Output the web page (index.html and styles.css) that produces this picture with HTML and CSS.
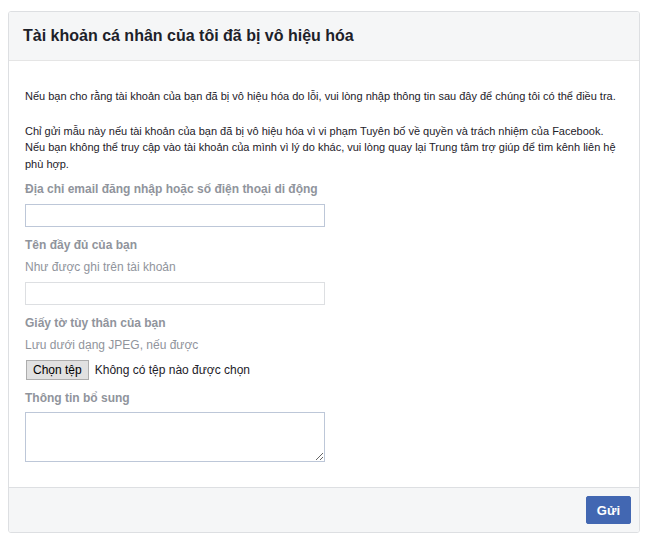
FILE: index.html
```html
<!DOCTYPE html>
<html lang="vi">
<head>
<meta charset="utf-8">
<title>Tài khoản cá nhân của tôi đã bị vô hiệu hóa</title>
<link rel="stylesheet" href="styles.css">
</head>
<body>
<div class="card">
  <div class="card-header">
    <h2 class="title">Tài khoản cá nhân của tôi đã bị vô hiệu hóa</h2>
  </div>
  <form class="card-body">
    <p class="intro">Nếu bạn cho rằng tài khoản của bạn đã bị vô hiệu hóa do lỗi, vui lòng nhập thông tin sau đây để chúng tôi có thể điều tra.</p>
    <p class="intro second">Chỉ gửi mẫu này nếu tài khoản của bạn đã bị vô hiệu hóa vì vi phạm Tuyên bố về quyền và trách nhiệm của Facebook. Nếu bạn không thể truy cập vào tài khoản của mình vì lý do khác, vui lòng quay lại Trung tâm trợ giúp để tìm kênh liên hệ phù hợp.</p>

    <div class="field">
      <label class="label">Địa chỉ email đăng nhập hoặc số điện thoại di động</label>
      <input class="text-input" type="text">
    </div>

    <div class="field">
      <label class="label with-help">Tên đầy đủ của bạn</label>
      <div class="help">Như được ghi trên tài khoản</div>
      <input class="text-input light" type="text">
    </div>

    <div class="field">
      <label class="label with-help">Giấy tờ tùy thân của bạn</label>
      <div class="help">Lưu dưới dạng JPEG, nếu được</div>
      <div class="file-row">
        <button type="button" class="file-btn">Chọn tệp</button>
        <span class="file-name">Không có tệp nào được chọn</span>
      </div>
    </div>

    <div class="field last">
      <label class="label with-help">Thông tin bổ sung</label>
      <textarea class="text-area"></textarea>
    </div>
  </form>
  <div class="card-footer">
    <button type="button" class="submit-btn">Gửi</button>
  </div>
</div>
</body>
</html>
```

FILE: styles.css
```css
html, body {
  background: #ffffff;
}
body {
  margin: 11px 6px 0 8px;
  font-family: "Liberation Sans", Arial, Helvetica, sans-serif;
  font-size: 12px;
  color: #1d2129;
}
.card {
  border: 1px solid #dddfe2;
  border-radius: 3px;
  background: #fff;
  overflow: hidden;
}
.card-header {
  background: #f5f6f7;
  border-bottom: 1px solid #e5e5e5;
  padding: 14px 14px;
}
.title {
  margin: 0;
  font-size: 16px;
  line-height: 20px;
  font-weight: bold;
  color: #1d2129;
}
.card-body {
  padding: 27px 16px 25px;
}
.intro {
  margin: 0;
  font-size: 11px;
  line-height: 16.5px;
}
.intro.second {
  margin-top: 18px;
  margin-bottom: 9px;
}
.field {
  margin-bottom: 10px;
}
.field.last {
  margin-bottom: 0;
}
.label {
  display: block;
  font-weight: bold;
  font-size: 12px;
  line-height: 16px;
  color: #90949c;
  margin-bottom: 7px;
}
.label.with-help {
  margin-bottom: 6px;
}
.help {
  color: #90949c;
  line-height: 16px;
  margin-bottom: 7px;
}
.text-input {
  display: block;
  box-sizing: border-box;
  width: 300px;
  height: 23px;
  margin: 0;
  border: 1px solid #bdc7d8;
  padding: 3px;
  font: inherit;
  outline: none;
}
.text-input.light {
  border-color: #dddfe2;
}
.file-row {
  display: flex;
  align-items: center;
  height: 20px;
}
.file-btn {
  box-sizing: border-box;
  height: 20px;
  margin: 0 6px 0 1px;
  padding: 0 6px;
  background: #e1e1e1;
  border: 1px solid #adadad;
  border-radius: 0;
  font-family: "Liberation Sans", Arial, sans-serif;
  font-size: 12px;
  color: #000;
}
.file-name {
  font-size: 12px;
  color: #1d2129;
}
.text-area {
  display: block;
  box-sizing: border-box;
  width: 300px;
  height: 50px;
  margin: 0;
  border: 1px solid #bdc7d8;
  padding: 3px;
  font: inherit;
  resize: both;
  outline: none;
}
.card-footer {
  background: #f5f6f7;
  border-top: 1px solid #dddfe2;
  padding: 8px 8px;
  display: flex;
  justify-content: flex-end;
}
.submit-btn {
  box-sizing: border-box;
  height: 28px;
  padding: 0 10px;
  background: #4267b2;
  border: 1px solid #4267b2;
  border-radius: 2px;
  color: #fff;
  font-family: "Liberation Sans", Arial, sans-serif;
  font-size: 13px;
  font-weight: bold;
}
```
